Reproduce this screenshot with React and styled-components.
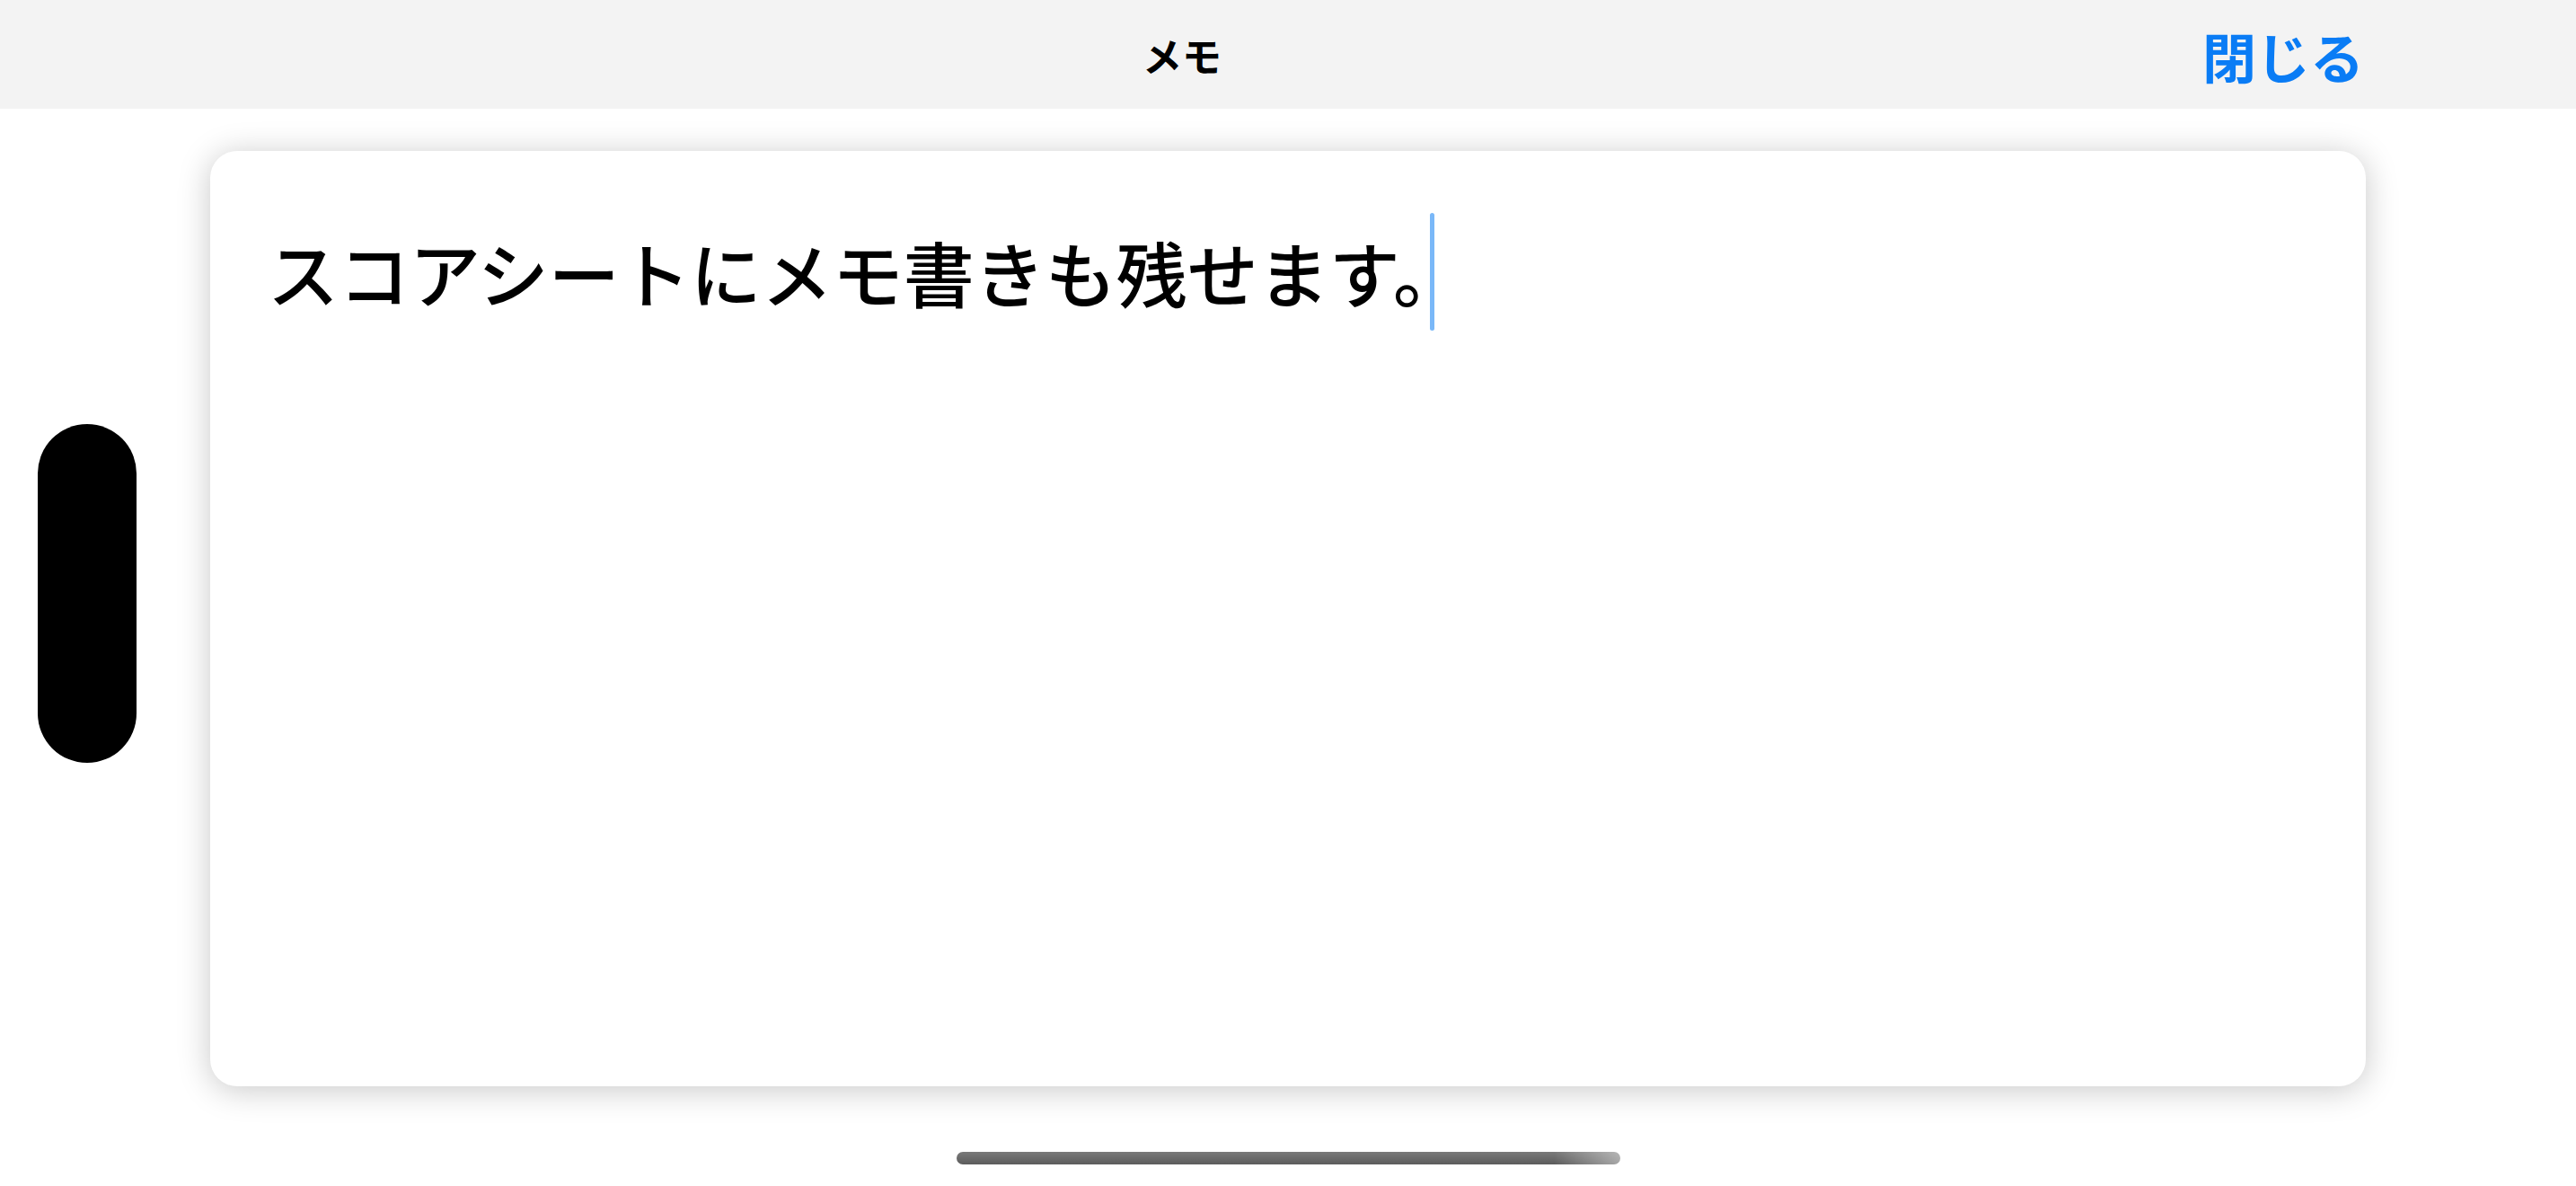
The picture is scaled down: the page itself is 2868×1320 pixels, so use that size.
import React from 'react';
import styled, { createGlobalStyle } from 'styled-components';

const GlobalStyle = createGlobalStyle`
    html, body {
        margin: 0;
        padding: 0;
        background: #ffffff;
    }
    body {
        font-family: "Noto Sans CJK JP", "Noto Sans", sans-serif;
        color: #000;
    }
`;

const Screen = styled.div`
    width: 2868px;
    height: 1320px;
    display: flex;
    flex-direction: column;
    background: #ffffff;
    overflow: hidden;
`;

const NavBar = styled.header`
    height: 121px;
    flex-shrink: 0;
    display: grid;
    grid-template-columns: 1fr;
    align-items: center;
    padding-right: 236px;
    background: #f3f3f3;
`;

const Title = styled.h1`
    grid-area: 1 / 1;
    justify-self: center;
    margin: 0;
    font-size: 44px;
    font-weight: 700;
    line-height: 1;
    color: #000;
`;

const CloseButton = styled.button`
    grid-area: 1 / 1;
    justify-self: end;
    border: none;
    background: none;
    padding: 0;
    margin-top: 2px;
    font-family: inherit;
    font-size: 60px;
    font-weight: 700;
    line-height: 1;
    color: #0a7cf5;
`;

const Body = styled.main`
    flex: 1;
    display: flex;
    align-items: flex-start;
    gap: 82px;
    padding: 47px 0 0 42px;
`;

const SideHandle = styled.div`
    width: 110px;
    height: 377px;
    margin-top: 304px;
    flex-shrink: 0;
    background: #000;
    border-radius: 56px;
`;

const Column = styled.div`
    display: flex;
    flex-direction: column;
    align-items: center;
`;

const NoteCard = styled.section`
    width: 2400px;
    height: 1041px;
    box-sizing: border-box;
    padding: 69px 64px;
    background: #ffffff;
    border-radius: 30px;
    box-shadow: 0 4px 36px rgba(0, 0, 0, 0.22);
`;

const NoteText = styled.p`
    margin: 0;
    font-size: 79px;
    line-height: 131px;
    font-weight: 500;
    color: #000;
    white-space: nowrap;
`;

const Caret = styled.span`
    display: inline-block;
    width: 5px;
    height: 131px;
    vertical-align: top;
    margin-left: -38px;
    border-radius: 3px;
    background: #7ab8f8;
`;

const HomeIndicator = styled.div`
    width: 739px;
    height: 14px;
    margin-top: 73px;
    border-radius: 7px;
    background:
        linear-gradient(90deg, rgba(255, 255, 255, 0) 0%, rgba(255, 255, 255, 0) 90%, rgba(255, 255, 255, 0.45) 100%),
        linear-gradient(180deg, #7a7a7a 0%, #5c5c5c 100%);
`;

function App() {
    return (
        <Screen>
            <GlobalStyle />
            <NavBar>
                <Title>メモ</Title>
                <CloseButton>閉じる</CloseButton>
            </NavBar>
            <Body>
                <SideHandle />
                <Column>
                    <NoteCard>
                        <NoteText>
                            スコアシートにメモ書きも残せます。
                            <Caret />
                        </NoteText>
                    </NoteCard>
                    <HomeIndicator />
                </Column>
            </Body>
        </Screen>
    );
}

export default App;
